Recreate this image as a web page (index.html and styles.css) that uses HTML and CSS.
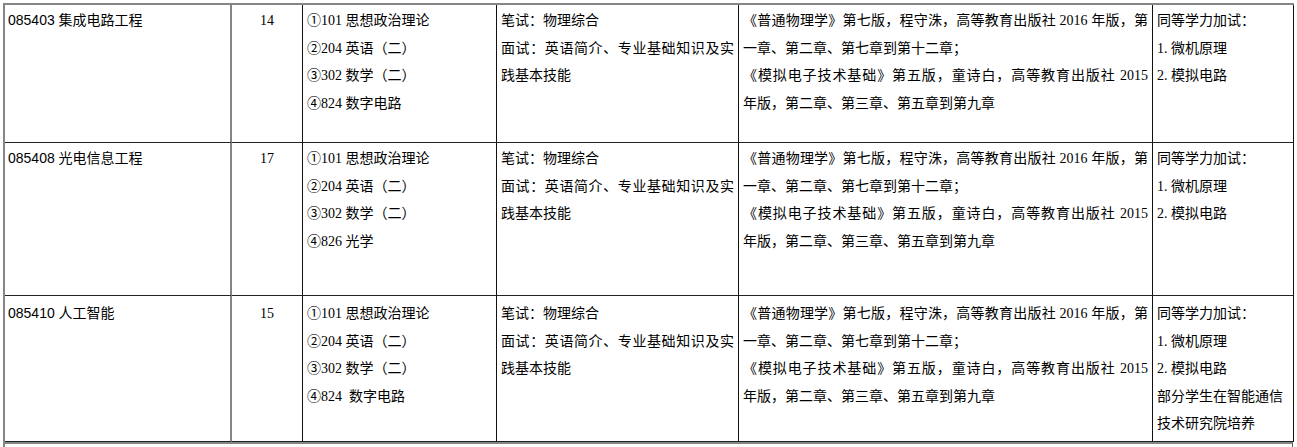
FILE: index.html
```html
<!DOCTYPE html>
<html lang="zh-CN">
<head>
<meta charset="utf-8">
<title>专业目录</title>
<link rel="stylesheet" href="styles.css">
</head>
<body>
<div class="sheet">
  <div class="grid">
    <div class="cell name r1">085403 集成电路工程</div>
    <div class="cell num r1">14</div>
    <div class="cell r1">①101 思想政治理论<br>②204 英语（二）<br>③302 数学（二）<br>④824 数字电路</div>
    <div class="cell exam r1"><span class="ln">笔试：物理综合</span><span class="ln j">面试：英语简介、专业基础知识及实</span><span class="ln">践基本技能</span></div>
    <div class="cell books r1"><span class="ln j">《普通物理学》第七版，程守洙，高等教育出版社 2016 年版，第</span><span class="ln">一章、第二章、第七章到第十二章；</span><span class="ln j">《模拟电子技术基础》第五版，童诗白，高等教育出版社 2015</span><span class="ln">年版，第二章、第三章、第五章到第九章</span></div>
    <div class="cell r1">同等学力加试：<br>1. 微机原理<br>2. 模拟电路</div>

    <div class="cell name r2">085408 光电信息工程</div>
    <div class="cell num r2">17</div>
    <div class="cell r2">①101 思想政治理论<br>②204 英语（二）<br>③302 数学（二）<br>④826 光学</div>
    <div class="cell exam r2"><span class="ln">笔试：物理综合</span><span class="ln j">面试：英语简介、专业基础知识及实</span><span class="ln">践基本技能</span></div>
    <div class="cell books r2"><span class="ln j">《普通物理学》第七版，程守洙，高等教育出版社 2016 年版，第</span><span class="ln">一章、第二章、第七章到第十二章；</span><span class="ln j">《模拟电子技术基础》第五版，童诗白，高等教育出版社 2015</span><span class="ln">年版，第二章、第三章、第五章到第九章</span></div>
    <div class="cell r2">同等学力加试：<br>1. 微机原理<br>2. 模拟电路</div>

    <div class="cell name r3">085410 人工智能</div>
    <div class="cell num r3">15</div>
    <div class="cell r3">①101 思想政治理论<br>②204 英语（二）<br>③302 数学（二）<br>④824&nbsp; 数字电路</div>
    <div class="cell exam r3"><span class="ln">笔试：物理综合</span><span class="ln j">面试：英语简介、专业基础知识及实</span><span class="ln">践基本技能</span></div>
    <div class="cell books r3"><span class="ln j">《普通物理学》第七版，程守洙，高等教育出版社 2016 年版，第</span><span class="ln">一章、第二章、第七章到第十二章；</span><span class="ln j">《模拟电子技术基础》第五版，童诗白，高等教育出版社 2015</span><span class="ln">年版，第二章、第三章、第五章到第九章</span></div>
    <div class="cell r3">同等学力加试：<br>1. 微机原理<br>2. 模拟电路<br>部分学生在智能通信<br>技术研究院培养</div>
  </div>
  <div class="next-row"></div>
</div>
</body>
</html>
```
FILE: styles.css
```css
html, body {
  margin: 0;
  padding: 0;
  background: #ffffff;
  overflow: hidden;
}

.sheet {
  margin: 3px 0 0 3px;
  width: 1291px;
}

.grid {
  display: grid;
  grid-template-columns: 227px 71px 194px 242px 414px 141px;
  grid-template-rows: 138px 153px 146px;
  border-left: 2px solid #858585;
  border-top: 2px solid #858585;
}

.cell {
  box-sizing: border-box;
  border-right: 1px solid #111111;
  border-bottom: 1px solid #222222;
  padding: 2px 4px 0 4px;
  font-family: "Liberation Serif", "Noto Sans CJK SC", serif;
  font-size: 14px;
  line-height: 27.5px;
  color: #000000;
  white-space: nowrap;
  overflow: hidden;
}

.cell.name {
  font-family: "Liberation Sans", "Noto Sans CJK SC", sans-serif;
  border-right: 2px solid #858585;
  padding-left: 3px;
}

.cell.num {
  text-align: center;
  padding-left: 0;
  padding-right: 0;
}

.ln {
  display: block;
}

.ln.j {
  text-align: justify;
  text-align-last: justify;
  text-justify: inter-character;
}

.r1 { padding-top: 2px; }
.r2 { padding-top: 2px; }
.r3 { padding-top: 4px; }

.next-row {
  box-sizing: border-box;
  height: 6px;
  border-top: 2px solid #858585;
  border-left: 2px solid #858585;
  border-right: 1px solid #555555;
  width: 1290px;
}
```
